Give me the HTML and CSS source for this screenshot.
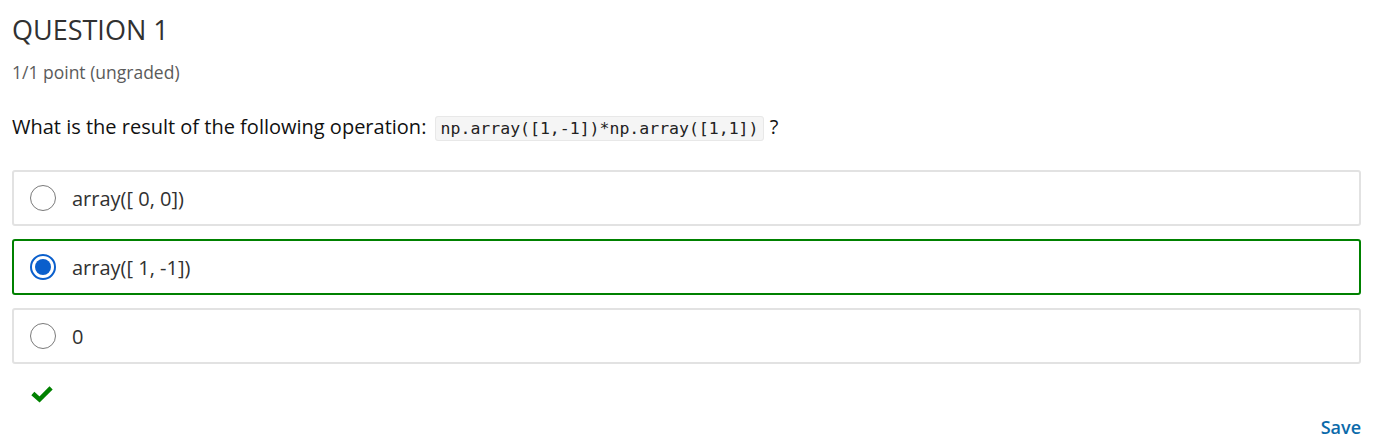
FILE: index.html
```html
<!DOCTYPE html>
<html>
<head>
<meta charset="utf-8">
<link rel="stylesheet" href="styles.css">
</head>
<body>
<div class="problem">
  <h3 class="title">QUESTION 1</h3>
  <div class="points">1/1 point (ungraded)</div>
  <p class="prompt">What is the result of the following operation: <code>np.array([1,-1])*np.array([1,1])</code> ?</p>
  <div class="choices">
    <label class="choice">
      <span class="radio"></span>
      <span class="label">array([ 0, 0])</span>
    </label>
    <label class="choice correct">
      <span class="radio checked"></span>
      <span class="label">array([ 1, -1])</span>
    </label>
    <label class="choice">
      <span class="radio"></span>
      <span class="label">0</span>
    </label>
  </div>
  <div class="status">
    <svg width="22" height="18" viewBox="0 0 22 18"><path d="M3.5 10 L8.5 14.5 L18.5 4.5" fill="none" stroke="#008100" stroke-width="4.5" stroke-linecap="square" stroke-linejoin="miter"/></svg>
  </div>
  <div class="actions"><span class="save">Save</span></div>
</div>
</body>
</html>
```
FILE: styles.css
```css
html, body {
  margin: 0;
  padding: 0;
  background: #fff;
}
body {
  font-family: "Open Sans", "Liberation Sans", sans-serif;
  color: #313131;
}
.problem {
  padding: 0 18px 0 12px;
}
.title {
  margin: 0;
  padding-top: 13px;
  font-size: 27px;
  font-weight: 400;
  color: #313131;
  line-height: 34px;
}
.points {
  margin-top: 13px;
  font-size: 17.5px;
  line-height: 25px;
  color: #5b5b5b;
}
.prompt {
  margin: 27px 0 0 0;
  font-size: 20px;
  line-height: 30px;
  color: #111;
}
code {
  font-family: "DejaVu Sans Mono", "Liberation Mono", monospace;
  font-size: 16.5px;
  background: #f5f5f5;
  border: 1px solid #e8e8e8;
  border-radius: 3px;
  padding: 2px 5px;
  margin-left: 3px;
  color: #222;
}
.choices {
  margin-top: 26px;
  display: flex;
  flex-direction: column;
  gap: 13px;
}
.choice {
  display: flex;
  align-items: center;
  height: 52px;
  border: 2px solid #e2e2e2;
  border-radius: 3px;
  padding-left: 16px;
}
.choice.correct {
  border-color: #008100;
}
.radio {
  width: 26px;
  height: 26px;
  border: 1px solid #7a7a7a;
  border-radius: 50%;
  box-sizing: border-box;
  flex: none;
  position: relative;
}
.radio.checked {
  border: 2px solid #0a5fcc;
}
.radio.checked::after {
  content: "";
  position: absolute;
  left: 3px;
  top: 3px;
  width: 16px;
  height: 16px;
  border-radius: 50%;
  background: #0a5fcc;
}
.label {
  margin-left: 16px;
  font-size: 20px;
  color: #313131;
}
.status {
  margin-top: 21px;
  padding-left: 19px;
  height: 20px;
}
.actions {
  display: flex;
  justify-content: flex-end;
  margin-top: 10px;
}
.save {
  font-size: 18px;
  font-weight: 600;
  color: #0b6aaa;
}
```
